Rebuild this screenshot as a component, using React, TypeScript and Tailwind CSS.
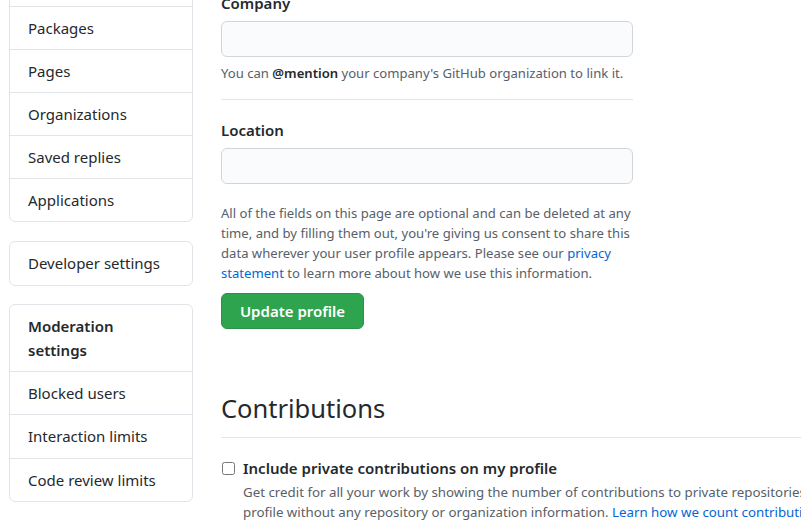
import React from "react";

const topItems = ["Repositories", "Packages", "Pages", "Organizations", "Saved replies", "Applications"];
const moderationItems = ["Blocked users", "Interaction limits", "Code review limits"];

const font = { fontFamily: '"Segoe UI", "Noto Sans", "Liberation Sans", sans-serif' };

const App: React.FC = () => {
  return (
    <div className="w-[801px] h-[528px] overflow-hidden bg-white text-[#24292e]" style={font}>
      <div className="flex items-start">
        {/* sidebar */}
        <div className="w-[184px] ml-[9px] shrink-0 mt-[-37px]">
          <nav className="border border-[#e1e4e8] rounded-md">
            {topItems.map((item, i) => (
              <div
                key={item}
                className={`px-[18px] py-[9px] text-[15px] leading-6 ${i > 0 ? "border-t border-[#e1e4e8]" : ""}`}
              >
                {item}
              </div>
            ))}
          </nav>
          <nav className="border border-[#e1e4e8] rounded-md mt-[19px]">
            <div className="px-[18px] pt-[9px] pb-[10px] text-[15px] leading-6">Developer settings</div>
          </nav>
          <nav className="border border-[#e1e4e8] rounded-md mt-[18px]">
            <div className="px-[18px] py-[9px] text-[15px] leading-6 font-semibold">
              Moderation
              <br />
              settings
            </div>
            {moderationItems.map((item, i) => (
              <div
                key={item}
                className={`px-[18px] py-[9px] text-[15px] leading-6 border-t border-[#e1e4e8] ${i === 1 ? "pb-[10px]" : ""}`}
              >
                {item}
              </div>
            ))}
          </nav>
        </div>

        {/* main */}
        <div className="ml-[28px] flex-1 mt-[-9px]">
          <div className="w-[412px]">
            <label className="block text-[15px] leading-6 font-semibold mb-[6px]">Company</label>
            <div className="h-[36px] rounded-md border border-[#d1d5da] bg-[#fafbfc]" />
            <p className="text-[13.1px] leading-5 text-[#586069] mt-[6px]">
              You can <span className="font-semibold text-[#24292e]">@mention</span> your company's GitHub
              organization to link it.
            </p>
            <div className="border-t border-[#e1e4e8] mt-[16px]" />
            <label className="block text-[15px] leading-6 font-semibold mt-[18px] mb-[6px]">Location</label>
            <div className="h-[36px] rounded-md border border-[#d1d5da] bg-[#fafbfc]" />
            <p className="text-[13.1px] leading-5 text-[#586069] mt-[19px]">
              All of the fields on this page are optional and can be deleted at any time, and by filling them out,
              you're giving us consent to share this data wherever your user profile appears. Please see our{" "}
              <a className="text-[#0366d6]">privacy statement</a> to learn more about how we use this information.
            </p>
            <button className="mt-[10px] h-[36px] w-[143px] rounded-md bg-[#2ea44f] border border-[#2a9147] text-white text-[15px] font-semibold">
              Update profile
            </button>
          </div>

          <h2 className="text-[25.5px] leading-9 font-normal mt-[61px] pb-[11px] border-b border-[#e1e4e8]">
            Contributions
          </h2>
          <div className="flex items-start mt-[18px] whitespace-nowrap">
            <input type="checkbox" className="mt-[6px] ml-[1px] w-[13px] h-[13px]" />
            <div className="ml-[8px]">
              <div className="text-[15px] leading-6 font-semibold">Include private contributions on my profile</div>
              <p className="text-[13.3px] leading-5 text-[#586069] mt-[2px]">
                Get credit for all your work by showing the number of contributions to private repositories on your
                <br />
                profile without any repository or organization information.{" "}
                <a className="text-[#0366d6]">Learn how we count contributions</a>.
              </p>
            </div>
          </div>
        </div>
      </div>
    </div>
  );
};

export default App;
